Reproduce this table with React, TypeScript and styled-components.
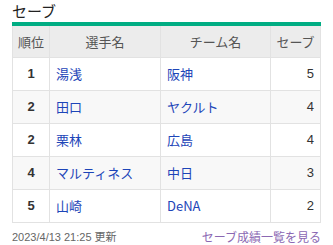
import * as React from 'react';
import styled, { createGlobalStyle } from 'styled-components';

const GlobalStyle = createGlobalStyle`
  body {
    margin: 0;
    background: #fff;
    font-family: "Noto Sans CJK JP", "Liberation Sans", sans-serif;
  }
`;

interface IRow {
  rank: number;
  player: string;
  team: string;
  saves: number;
}

const rows: IRow[] = [
  { rank: 1, player: '湯浅', team: '阪神', saves: 5 },
  { rank: 2, player: '田口', team: 'ヤクルト', saves: 4 },
  { rank: 2, player: '栗林', team: '広島', saves: 4 },
  { rank: 4, player: 'マルティネス', team: '中日', saves: 3 },
  { rank: 5, player: '山崎', team: 'DeNA', saves: 2 },
];

const Wrapper = styled.div`
  width: 308px;
  padding: 0 12px;
`;

const Title = styled.h2`
  margin: 0;
  height: 22px;
  font-size: 15px;
  font-weight: normal;
  line-height: 22px;
  color: #222;
`;

const Table = styled.table`
  width: 308px;
  border-collapse: collapse;
  border-top: 4px solid #00ad83;
  table-layout: fixed;
  font-size: 13px;
`;

const Head = styled.th`
  height: 31px;
  padding: 0;
  background: #ececec;
  color: #555;
  font-weight: normal;
  text-align: center;
  white-space: nowrap;
  line-height: 16px;
  border: 1px solid #e2e2e2;
  border-top: none;
`;

const Row = styled.tr<{ $striped: boolean }>`
  background: ${(p) => (p.$striped ? '#f8f8f8' : '#fff')};
`;

const Cell = styled.td<{ $align?: string; $bold?: boolean }>`
  height: 32px;
  padding: 0 6px;
  line-height: 16px;
  border: 1px solid #e2e2e2;
  white-space: nowrap;
  text-align: ${(p) => p.$align || 'left'};
  font-weight: ${(p) => (p.$bold ? 'bold' : 'normal')};
  font-family: "Liberation Sans", "Noto Sans CJK JP", sans-serif;
  color: #333;
`;

const Link = styled.a`
  color: #1d45b8;
  text-decoration: none;
  font-family: "Noto Sans CJK JP", sans-serif;
`;

const Footer = styled.div`
  display: flex;
  justify-content: space-between;
  align-items: center;
  height: 26px;
`;

const Updated = styled.span`
  font-size: 11px;
  color: #666;
  font-family: "Liberation Sans", "Noto Sans CJK JP", sans-serif;
`;

const MoreLink = styled.a`
  font-size: 12px;
  color: #8b68b3;
  text-decoration: none;
  margin-right: -1px;
`;

export default function App() {
  return (
    <Wrapper>
      <GlobalStyle />
      <Title>セーブ</Title>
      <Table>
        <colgroup>
          <col style={{ width: 37 }} />
          <col style={{ width: 111 }} />
          <col style={{ width: 110 }} />
          <col style={{ width: 50 }} />
        </colgroup>
        <thead>
          <tr>
            <Head>順位</Head>
            <Head>選手名</Head>
            <Head>チーム名</Head>
            <Head>セーブ</Head>
          </tr>
        </thead>
        <tbody>
          {rows.map((row, index) => (
            <Row key={index} $striped={index % 2 === 1}>
              <Cell $align="center" $bold>{row.rank}</Cell>
              <Cell><Link href="#">{row.player}</Link></Cell>
              <Cell><Link href="#">{row.team}</Link></Cell>
              <Cell $align="right">{row.saves}</Cell>
            </Row>
          ))}
        </tbody>
      </Table>
      <Footer>
        <Updated>2023/4/13 21:25 更新</Updated>
        <MoreLink href="#">セーブ成績一覧を見る</MoreLink>
      </Footer>
    </Wrapper>
  );
}
